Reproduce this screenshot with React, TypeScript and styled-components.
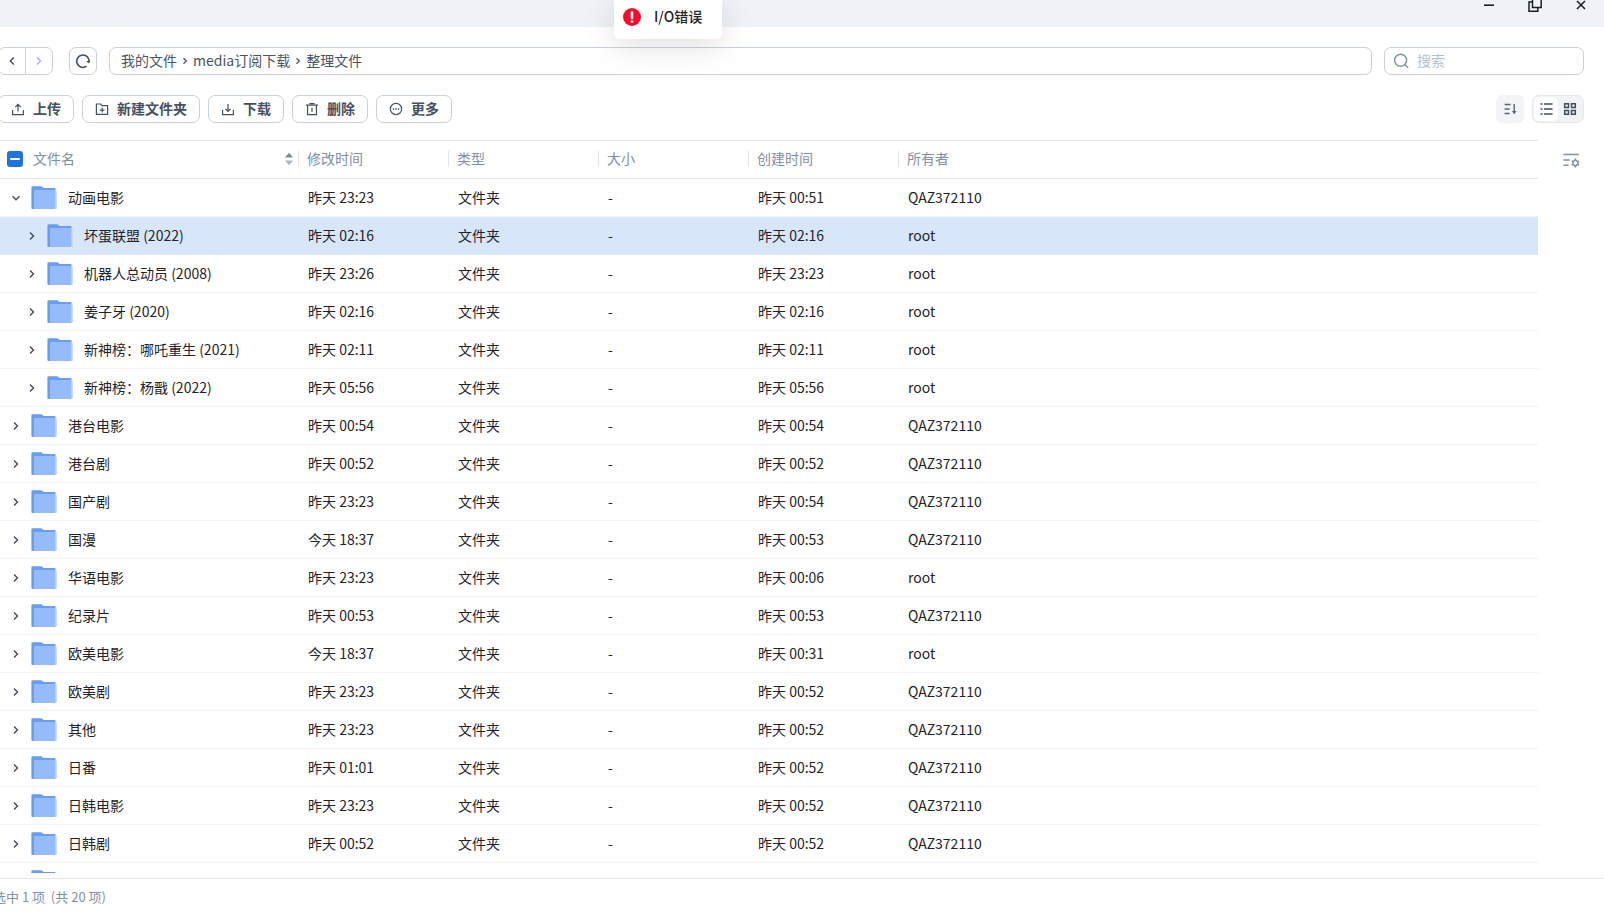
import React from 'react';
import styled, { createGlobalStyle, css } from 'styled-components';

const GlobalStyle = createGlobalStyle`
  *, *::before, *::after { box-sizing: border-box; }
  body {
    margin: 0;
    background: #fff;
    color: #1f2329;
    font-family: 'Noto Sans CJK SC', 'Open Sans', sans-serif;
    font-size: 14px;
    line-height: 20px;
  }
  button, input { font: inherit; color: inherit; }
  button { cursor: pointer; }
  svg { display: block; flex: none; }
`;

const Window = styled.div`
  position: relative;
  display: flex;
  flex-direction: column;
  height: 100vh;
  overflow: hidden;
`;

const TitleBar = styled.header`
  display: flex;
  justify-content: flex-end;
  flex: none;
  height: 27px;
  padding-right: 14px;
  gap: 28px;
  background: #eff3f8;
  overflow: hidden;
`;

const WindowButton = styled.button`
  display: flex;
  justify-content: center;
  width: 18px;
  height: 14px;
  margin: -2px 0 0;
  padding: 0;
  border: 0;
  background: none;
  color: #1b1f26;
`;

const Toast = styled.div`
  position: absolute;
  top: -6px;
  left: calc(50% - 188px);
  z-index: 2;
  display: flex;
  align-items: center;
  gap: 12px;
  height: 45px;
  padding: 0 20px 0 8px;
  border-radius: 6px;
  background: #fff;
  box-shadow: 0 8px 32px rgba(0, 0, 0, 0.12);
  font-weight: 500;
`;

/* Lifts the line so that CJK glyphs sit centred beside icons. */
const Text = styled.span`
  padding-bottom: 2px;
`;

const AddressBar = styled.div`
  display: flex;
  flex: none;
  height: 28px;
  margin: 20px 20px 0 -2px;
`;

const outline = css`
  border: 1px solid #c9d1da;
  border-radius: 7px;
  background: #fff;
`;

const History = styled.div`
  ${outline}
  display: flex;
  width: 55px;
  overflow: hidden;
`;

const HistoryButton = styled.button<{ $muted?: boolean }>`
  display: flex;
  flex: 1;
  align-items: center;
  justify-content: center;
  padding: 0;
  border: 0;
  background: none;
  color: ${p => (p.$muted ? '#a9b4c2' : '#414c5c')};
  & + & { border-left: 1px solid #c9d1da; }
`;

const Reload = styled.button`
  ${outline}
  display: flex;
  align-items: center;
  justify-content: center;
  width: 28px;
  margin-left: 16px;
  padding: 0;
  color: #414c5c;
`;

const Path = styled.nav`
  ${outline}
  display: flex;
  flex: 1;
  align-items: center;
  margin: 0 12px;
  padding: 0 11px;
  gap: 3px;
  color: #4a5563;
`;

const Crumb = styled.a`
  padding-bottom: 2px;
  color: inherit;
  text-decoration: none;
`;

const Search = styled.label`
  ${outline}
  display: flex;
  align-items: center;
  width: 200px;
  padding: 0 8px;
  gap: 8px;
  color: #8090a5;
`;

const SearchInput = styled.input`
  flex: 1;
  min-width: 0;
  padding: 0 0 2px;
  border: 0;
  outline: 0;
  background: none;
  &::placeholder { color: #b5bfcc; opacity: 1; }
`;

const Toolbar = styled.div`
  display: flex;
  flex: none;
  gap: 8px;
  height: 28px;
  margin: 20px 20px 0 -2px;
`;

const Action = styled.button`
  ${outline}
  display: flex;
  align-items: center;
  gap: 8px;
  padding: 0 12px;
  color: #465061;
  font-weight: 700;
  white-space: nowrap;
`;

const SortButton = styled.button`
  display: flex;
  align-items: center;
  justify-content: center;
  width: 28px;
  margin-left: auto;
  padding: 0;
  border: 0;
  border-radius: 6px;
  background: #f2f4f7;
  color: #5b6675;
`;

const ViewSwitch = styled.div`
  display: flex;
  width: 52px;
  padding: 1px;
  border: 1px solid #e6e8ec;
  border-radius: 7px;
  background: #f0f2f6;
`;

const ViewButton = styled.button<{ $active?: boolean }>`
  display: flex;
  flex: 1;
  align-items: center;
  justify-content: center;
  padding: 0;
  border: 0;
  border-radius: 6px;
  background: ${p => (p.$active ? '#fff' : 'none')};
  color: #414c5c;
`;

const Browser = styled.main`
  display: flex;
  flex: 1;
  min-height: 0;
  margin: 17px 0 5px;
  overflow: hidden;
`;

const FileTable = styled.table`
  flex: 1;
  align-self: flex-start;
  table-layout: fixed;
  border-collapse: separate;
  border-spacing: 0;
`;

const Col = styled.col<{ $width?: number }>`
  width: ${p => (p.$width ? `${p.$width}px` : 'auto')};
`;

const HeadCell = styled.th`
  height: 39px;
  padding: 0 0 1px;
  border-top: 1px solid #e6e7ea;
  border-bottom: 1px solid #e6e7ea;
  color: #8090a5;
  font-weight: 400;
  text-align: left;
`;

const HeadLabel = styled.div<{ $first?: boolean }>`
  display: flex;
  align-items: center;
  height: 16px;
  padding-left: ${p => (p.$first ? 7 : 8)}px;
  border-left: ${p => (p.$first ? 0 : 1)}px solid #e1e4e8;
`;

const Check = styled.input`
  appearance: none;
  display: grid;
  place-items: center;
  width: 16px;
  height: 16px;
  margin: 0 10px 0 0;
  border-radius: 3px;
  background: #2171de;
  &::after {
    content: '';
    width: 10px;
    height: 2px;
    border-radius: 1px;
    background: #fff;
  }
`;

const SortMark = styled.span`
  margin: 0 5px 0 auto;
`;

const Row = styled.tr<{ $selected?: boolean }>`
  background: ${p => (p.$selected ? '#d7e6f9' : '#fff')};
`;

const Cell = styled.td`
  height: 38px;
  padding: 0 0 2px 10px;
  border-bottom: 1px solid #f2f3f5;
  white-space: nowrap;
  ${Row}[aria-selected='true'] & { border-color: #d7e6f9; }
`;

const NameCell = styled(Cell)`
  padding: 0;
`;

const Name = styled.div<{ $child?: boolean }>`
  display: flex;
  align-items: center;
  padding-left: ${p => (p.$child ? 26 : 10)}px;
`;

const Expand = styled.button`
  display: flex;
  width: 12px;
  margin-right: 9px;
  padding: 0;
  border: 0;
  background: none;
  color: #414c5c;
`;

const Label = styled(Text)`
  margin-left: 10px;
`;

const Side = styled.div`
  flex: none;
  width: 66px;
  padding: 12px 0 0 24px;
`;

const ColumnsButton = styled.button`
  display: flex;
  padding: 0;
  border: 0;
  background: none;
  color: #8090a5;
`;

const Status = styled.footer`
  flex: none;
  height: 37px;
  padding-top: 8px;
  border-top: 1px solid #e4e6e9;
  margin-left: -7px;
  color: #8090a5;
  font-size: 13px;
  white-space: pre;
`;

type IconProps = { size?: number; width?: number; children: React.ReactNode };
const Icon = ({ size = 16, width = 1.2, children }: IconProps) => (
  <svg width={size} height={size} viewBox={`0 0 ${size} ${size}`} fill="none" stroke="currentColor" strokeWidth={width} aria-hidden="true">
    {children}
  </svg>
);

const Chevron = ({ dir }: { dir: 'left' | 'right' | 'down' }) => {
  const d = { left: 'M7.8 2.5 4.3 6l3.5 3.5', right: 'M4 2.5 7.5 6 4 9.5', down: 'M2.5 4.3 6 7.8l3.5-3.5' }[dir];
  return <Icon size={12} width={1.4}><path d={d} /></Icon>;
};

const CrumbArrow = () => (
  <svg width="10" height="10" viewBox="0 0 10 10" fill="none" stroke="currentColor" strokeWidth="1.3" aria-hidden="true">
    <path d="M3.5 2.2 6.3 5 3.5 7.8" />
  </svg>
);

const Folder = () => (
  <svg width="27" height="24" viewBox="0 0 27 24" aria-hidden="true">
    <path d="M.4 1.5Q.4.3 1.6.3H9.9Q10.8.3 11.4.9L12.8 2H23.4Q24.6 2 24.6 3.2V23H1.6Q.4 23 .4 21.8Z" fill="#6a9df0" />
    <rect x="3" y="4.5" width="23" height="18.5" rx="1" fill="#c8dbfb" />
    <rect x="3" y="4.5" width="21.4" height="18.5" rx="1" fill="#95bbfb" />
  </svg>
);

type Entry = { name: string; modified: string; created: string; owner: string; child?: boolean; open?: boolean; selected?: boolean };
const Q = 'QAZ372110';
const entries: Entry[] = [
  { name: '动画电影', modified: '昨天 23:23', created: '昨天 00:51', owner: Q, open: true },
  { name: '坏蛋联盟 (2022)', modified: '昨天 02:16', created: '昨天 02:16', owner: 'root', child: true, selected: true },
  { name: '机器人总动员 (2008)', modified: '昨天 23:26', created: '昨天 23:23', owner: 'root', child: true },
  { name: '姜子牙 (2020)', modified: '昨天 02:16', created: '昨天 02:16', owner: 'root', child: true },
  { name: '新神榜：哪吒重生 (2021)', modified: '昨天 02:11', created: '昨天 02:11', owner: 'root', child: true },
  { name: '新神榜：杨戬 (2022)', modified: '昨天 05:56', created: '昨天 05:56', owner: 'root', child: true },
  { name: '港台电影', modified: '昨天 00:54', created: '昨天 00:54', owner: Q },
  { name: '港台剧', modified: '昨天 00:52', created: '昨天 00:52', owner: Q },
  { name: '国产剧', modified: '昨天 23:23', created: '昨天 00:54', owner: Q },
  { name: '国漫', modified: '今天 18:37', created: '昨天 00:53', owner: Q },
  { name: '华语电影', modified: '昨天 23:23', created: '昨天 00:06', owner: 'root' },
  { name: '纪录片', modified: '昨天 00:53', created: '昨天 00:53', owner: Q },
  { name: '欧美电影', modified: '今天 18:37', created: '昨天 00:31', owner: 'root' },
  { name: '欧美剧', modified: '昨天 23:23', created: '昨天 00:52', owner: Q },
  { name: '其他', modified: '昨天 23:23', created: '昨天 00:52', owner: Q },
  { name: '日番', modified: '昨天 01:01', created: '昨天 00:52', owner: Q },
  { name: '日韩电影', modified: '昨天 23:23', created: '昨天 00:52', owner: Q },
  { name: '日韩剧', modified: '昨天 00:52', created: '昨天 00:52', owner: Q },
];

const FileRow = ({ entry }: { entry: Entry }) => (
  <Row $selected={entry.selected} aria-selected={!!entry.selected}>
    <NameCell>
      <Name $child={entry.child}>
        <Expand aria-label={entry.name} aria-expanded={!!entry.open}><Chevron dir={entry.open ? 'down' : 'right'} /></Expand>
        <Folder />
        <Label>{entry.name}</Label>
      </Name>
    </NameCell>
    <Cell>{entry.modified}</Cell>
    <Cell>文件夹</Cell>
    <Cell>-</Cell>
    <Cell>{entry.created}</Cell>
    <Cell>{entry.owner}</Cell>
  </Row>
);

const columns = ['修改时间', '类型', '大小', '创建时间', '所有者'];

export default function App() {
  return (
    <Window>
      <GlobalStyle />
      <TitleBar>
        <WindowButton aria-label="最小化"><Icon size={14} width={1.6}><path d="M2 7.2h10" /></Icon></WindowButton>
        <WindowButton aria-label="还原">
          <Icon size={14} width={1.5}><path d="M4.5 .5h8.7v9H4.5zM4.5 4H1v9.2h8.8V9.5" /></Icon>
        </WindowButton>
        <WindowButton aria-label="关闭"><Icon size={14} width={1.6}><path d="m3 3 8 8M11 3l-8 8" /></Icon></WindowButton>
      </TitleBar>
      <Toast role="alert">
        <svg width="20" height="20" viewBox="0 0 20 20" aria-hidden="true">
          <circle cx="10" cy="10" r="9" fill="#fa0a2c" />
          <path d="M10 5.5v5.5" stroke="#fff" strokeWidth="2.6" strokeLinecap="round" />
          <circle cx="10" cy="14.6" r="1.4" fill="#fff" />
        </svg>
        <Text>I/O错误</Text>
      </Toast>
      <AddressBar>
        <History>
          <HistoryButton aria-label="后退"><Chevron dir="left" /></HistoryButton>
          <HistoryButton aria-label="前进" $muted><Chevron dir="right" /></HistoryButton>
        </History>
        <Reload aria-label="刷新">
          <Icon width={1.6}><path d="M11.6 13.2A6.2 6.2 0 1 1 14 9.4" /><path d="M14.8 7 14 10.2l-2.8-1.6" fill="currentColor" stroke="none" /></Icon>
        </Reload>
        <Path aria-label="路径">
          <Crumb href="#root">我的文件</Crumb>
          <CrumbArrow />
          <Crumb href="#media">media订阅下载</Crumb>
          <CrumbArrow />
          <Crumb href="#sorted">整理文件</Crumb>
        </Path>
        <Search>
          <Icon width={1.4}><circle cx="7.6" cy="7.2" r="6" /><path d="m11.9 11.5 3.2 3.2" /></Icon>
          <SearchInput type="text" aria-label="搜索" placeholder="搜索" />
        </Search>
      </AddressBar>
      <Toolbar>
        <Action><Icon size={14}><path d="M1.6 8v4.6h10.8V8M7 9.5V2.4M4.4 5 7 2.4 9.6 5" /></Icon><Text>上传</Text></Action>
        <Action><Icon size={14}><path d="M1.4 12.4V2h4.2L7 3.6h5.6v8.8zM7.2 5.8v4.6M4.9 8.1h4.6" /></Icon><Text>新建文件夹</Text></Action>
        <Action><Icon size={14}><path d="M1.6 8v4.6h10.8V8M7 2v7.2M4.4 6.8 7 9.4l2.6-2.6" /></Icon><Text>下载</Text></Action>
        <Action><Icon size={14}><path d="M1 3.2h12M4.4 1.6h5.2M2.6 3.2v9.4h8.8V3.2M7 5.8v4.2" /></Icon><Text>删除</Text></Action>
        <Action><Icon size={14}><circle cx="7" cy="7" r="5.6" /><path d="M3.8 7h1.4M6.3 7h1.4M8.8 7h1.4" strokeWidth="1.4" /></Icon><Text>更多</Text></Action>
        <SortButton aria-label="排序"><Icon size={14} width={1.4}><path d="M1.6 2.5h6M1.6 7h5M1.6 11.5h5M11.2 2v9" /><path d="M8.8 9h4.8l-2.4 3.2z" fill="currentColor" stroke="none" /></Icon></SortButton>
        <ViewSwitch>
          <ViewButton aria-label="列表" $active><Icon size={14} width={1.5}><path d="M1.5 2h2M5 2h8.5M1.5 7h2M5 7h8.5M1.5 12h2M5 12h8.5" /></Icon></ViewButton>
          <ViewButton aria-label="网格"><Icon size={14} width={1.5}><path d="M1.7 1.7h3.8v3.8H1.7zM8.5 1.7h3.8v3.8H8.5zM1.7 8.5h3.8v3.8H1.7zM8.5 8.5h3.8v3.8H8.5z" /></Icon></ViewButton>
        </ViewSwitch>
      </Toolbar>
      <Browser>
        <FileTable>
          <colgroup>
            <Col $width={298} />
            <Col $width={150} />
            <Col $width={150} />
            <Col $width={150} />
            <Col $width={150} />
            <Col />
          </colgroup>
          <thead>
            <tr>
              <HeadCell>
                <HeadLabel $first>
                  <Check type="checkbox" aria-label="全选" />
                  <Text>文件名</Text>
                  <SortMark>
                    <svg width="8" height="14" viewBox="0 0 8 14" aria-hidden="true">
                      <path d="M4 .8 8 5.5H0z" fill="#7888a0" />
                      <path d="M0 8.5h8L4 13.2z" fill="#a9b6c7" />
                    </svg>
                  </SortMark>
                </HeadLabel>
              </HeadCell>
              {columns.map(c => <HeadCell key={c}><HeadLabel><Text>{c}</Text></HeadLabel></HeadCell>)}
            </tr>
          </thead>
          <tbody>
            {entries.map(e => <FileRow key={e.name} entry={e} />)}
            <Row>
              <NameCell colSpan={6}>
                <Name><Expand aria-label="展开"><Chevron dir="right" /></Expand><Folder /></Name>
              </NameCell>
            </Row>
          </tbody>
        </FileTable>
        <Side>
          <ColumnsButton aria-label="列设置">
            <Icon size={18} width={1.5}>
              <path d="M1.4 2.6h15.4M1.4 8h6.4M1.4 13.2h5.2" />
              <path d="M13.4 7.4 14.5 9l1.9.1-.8 1.9.8 1.9-1.9.1-1.1 1.6-1.1-1.6-1.9-.1.8-1.9-.8-1.9 1.9-.1z" />
            </Icon>
          </ColumnsButton>
        </Side>
      </Browser>
      <Status>选中 1 项  (共 20 项)</Status>
    </Window>
  );
}
